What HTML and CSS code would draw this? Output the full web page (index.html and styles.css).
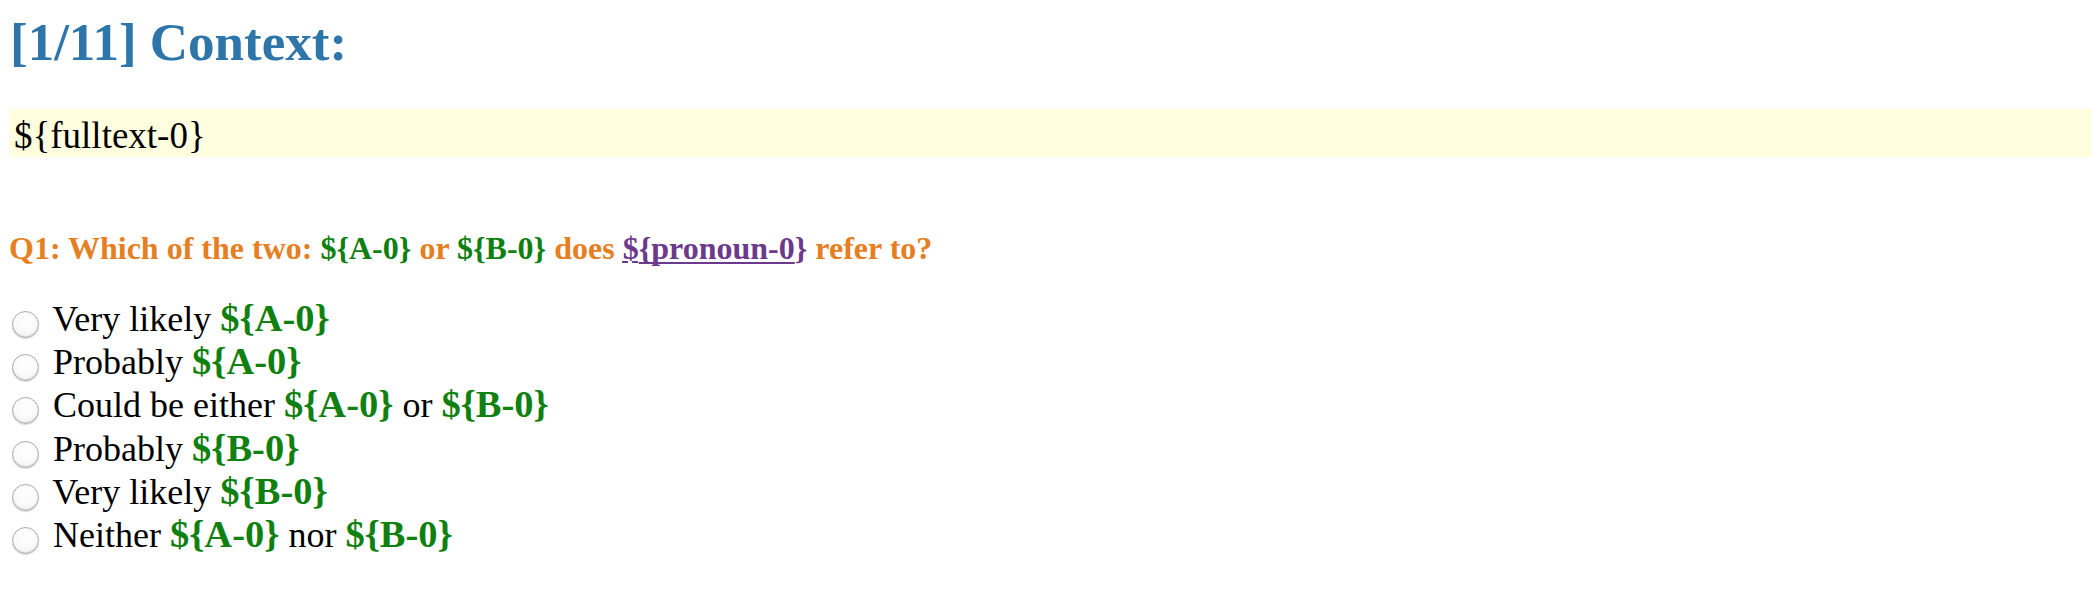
FILE: index.html
```html
<!DOCTYPE html>
<html>
<head>
<meta charset="utf-8">
<link rel="stylesheet" href="styles.css">
</head>
<body>
<div class="page">
  <h1 class="title">[1/11] Context:</h1>
  <div class="context">${fulltext-0}</div>
  <p class="question">Q1: Which of the two: <span class="cand">${A-0}</span> or <span class="cand">${B-0}</span> does <span class="pron"><span class="pron-dollar">$</span><span class="pron-main">{pronoun-0</span>}</span> refer to?</p>
  <div class="options">
    <label class="option"><input type="radio" name="q1" class="radio"> Very likely <b class="cand opt-cand">${A-0}</b></label>
    <label class="option"><input type="radio" name="q1" class="radio"> Probably <b class="cand opt-cand">${A-0}</b></label>
    <label class="option"><input type="radio" name="q1" class="radio"> Could be either <b class="cand opt-cand">${A-0}</b> or <b class="cand opt-cand">${B-0}</b></label>
    <label class="option"><input type="radio" name="q1" class="radio"> Probably <b class="cand opt-cand">${B-0}</b></label>
    <label class="option"><input type="radio" name="q1" class="radio"> Very likely <b class="cand opt-cand">${B-0}</b></label>
    <label class="option"><input type="radio" name="q1" class="radio"> Neither <b class="cand opt-cand">${A-0}</b> nor <b class="cand opt-cand">${B-0}</b></label>
  </div>
</div>
</body>
</html>
```

FILE: styles.css
```css
html, body {
  margin: 0;
  padding: 0;
  background: #ffffff;
}

body {
  font-family: "Liberation Serif", "Times New Roman", serif;
  color: #000000;
}

.page {
  padding: 13px 0 0 9px;
}

.title {
  margin: 0 0 0 1px;
  font-size: 53px;
  font-weight: bold;
  line-height: 58.6px;
  color: #2e76a9;
}

.context {
  margin-top: 37px;
  height: 48px;
  box-sizing: border-box;
  padding: 6px 0 0 5px;
  font-size: 37px;
  line-height: 41px;
  background: #ffffe0;
}

.question {
  margin: 74px 0 0 0;
  font-size: 32px;
  font-weight: bold;
  line-height: 35.4px;
  color: #e67e22;
}

.cand {
  color: #108010;
  font-weight: bold;
}

.opt-cand {
  font-size: 38.5px;
}

.pron {
  color: #6b3a8c;
}

.pron-dollar {
  text-decoration: underline dashed 2px;
  text-decoration-skip-ink: none;
  text-underline-offset: 3px;
}

.pron-main {
  text-decoration: underline solid 2px;
  text-decoration-skip-ink: none;
  text-underline-offset: 3px;
}

.options {
  margin-top: 31px;
  display: flex;
  flex-direction: column;
}

.option {
  display: block;
  font-size: 36px;
  line-height: 43.2px;
  height: 43.2px;
  white-space: nowrap;
}

.radio {
  -webkit-appearance: none;
  appearance: none;
  width: 27px;
  height: 27px;
  box-sizing: border-box;
  margin: 0 5px 0 3px;
  border: 1.5px solid #a9a9a9;
  border-radius: 50%;
  background: radial-gradient(circle at 50% 35%, #ffffff 0%, #fafafa 55%, #e8e8e8 100%);
  box-shadow: inset 0 -1px 1px rgba(0, 0, 0, 0.1), 0 1px 1px rgba(0, 0, 0, 0.15);
  vertical-align: -7px;
}
```
